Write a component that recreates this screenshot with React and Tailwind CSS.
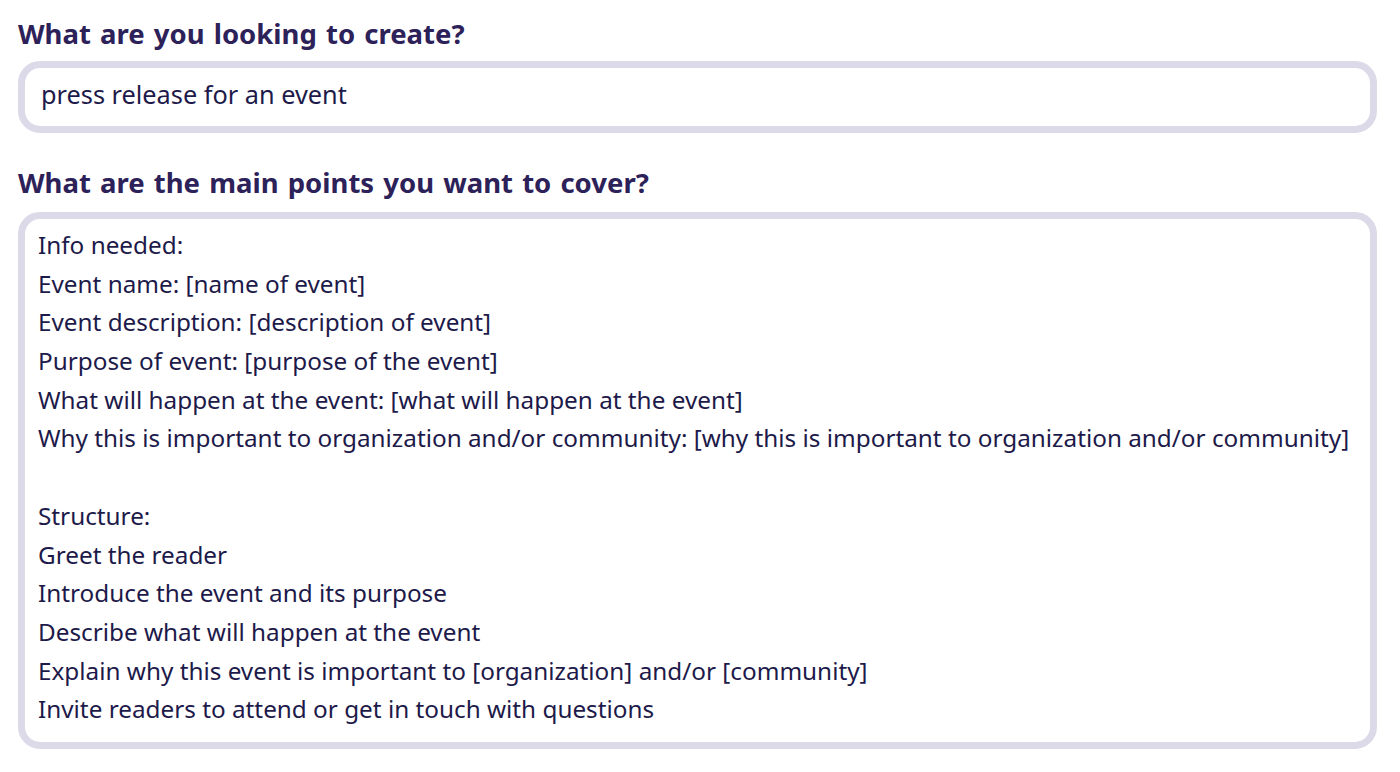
import React from 'react';

const points = [
  'Info needed:',
  'Event name: [name of event]',
  'Event description: [description of event]',
  'Purpose of event: [purpose of the event]',
  'What will happen at the event: [what will happen at the event]',
  'Why this is important to organization and/or community: [why this is important to organization and/or community]',
  '',
  'Structure:',
  'Greet the reader',
  'Introduce the event and its purpose',
  'Describe what will happen at the event',
  'Explain why this event is important to [organization] and/or [community]',
  'Invite readers to attend or get in touch with questions',
];

export default function App() {
  return (
    <div className="min-h-screen bg-white pl-[18px] pr-[23px] pt-[17px] font-['Noto_Sans',sans-serif]">
      <h2 className="text-[27.5px] leading-[34px] font-bold text-[#2d2159] [word-spacing:2px]">What are you looking to create?</h2>
      <div className="mt-[10px] h-[72px] rounded-[22px] border-[7px] border-[#dcd9e8] px-[16px] flex items-center">
        <span className="text-[25.3px] pb-[4px] text-[#1d1a4a]">press release for an event</span>
      </div>

      <h2 className="mt-[33px] text-[27.5px] leading-[34px] font-bold text-[#2d2159] [word-spacing:2px]">What are the main points you want to cover?</h2>
      <div className="mt-[12px] h-[537px] rounded-[22px] border-[7px] border-[#dcd9e8] pl-[13px] pt-[7px]">
        {points.map((line, i) => (
          <div key={i} className="text-[24.3px] leading-[38.7px] h-[38.7px] whitespace-nowrap text-[#1d1a4a]">{line}</div>
        ))}
      </div>
    </div>
  );
}
